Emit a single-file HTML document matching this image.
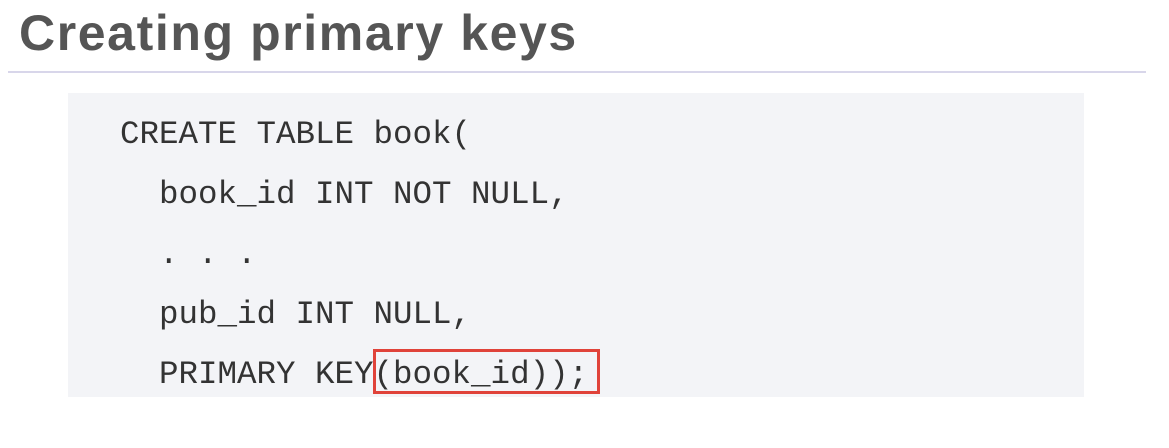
<!DOCTYPE html>
<html><head><style>
body{margin:0;width:1169px;height:448px;background:#fff;position:relative;overflow:hidden;font-family:"Liberation Sans",sans-serif}
.t{position:absolute;left:19px;top:8px;font-size:50px;line-height:50px;font-weight:bold;color:#555;letter-spacing:1.6px}
.hr{position:absolute;left:8px;top:71px;width:1138px;height:2px;background:#d8d6ea}
.box{position:absolute;left:68px;top:93px;width:1016px;height:304px;background:#f3f4f7}
.c{position:absolute;left:120px;font-family:"Liberation Mono",monospace;font-size:32.5px;color:#333;white-space:pre;line-height:1}
.r{position:absolute;left:373px;top:349px;width:221px;height:39px;border:3px solid #e0433a}
</style></head><body>
<div class="t">Creating primary keys</div>
<div class="hr"></div>
<div class="box"></div>
<div class="c" style="top:119px">CREATE TABLE book(</div>
<div class="c" style="top:179px">  book_id INT NOT NULL,</div>
<div class="c" style="top:239px">  . . .</div>
<div class="c" style="top:299px">  pub_id INT NULL,</div>
<div class="c" style="top:359px">  PRIMARY KEY(book_id));</div>
<div class="r"></div>
</body></html>
